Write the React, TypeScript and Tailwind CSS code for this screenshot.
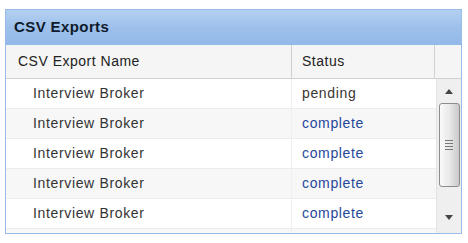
import React from 'react';

const rows = [
    { name: 'Interview Broker', status: 'pending' },
    { name: 'Interview Broker', status: 'complete' },
    { name: 'Interview Broker', status: 'complete' },
    { name: 'Interview Broker', status: 'complete' },
    { name: 'Interview Broker', status: 'complete' },
    { name: '', status: '' },
];

const App: React.FC = () => {
    return (
        <div className="w-[468px] h-[243px] bg-white pt-[9px] pl-[5px]" style={{ fontFamily: '"Liberation Sans", Arial, sans-serif' }}>
            <div className="w-[457px] h-[225px] border border-[#99bbe8] flex flex-col overflow-hidden">
                <div className="h-[35px] shrink-0 flex items-center pl-[8px] bg-gradient-to-b from-[#b4d0f1] via-[#9dc0eb] to-[#93b9e9]">
                    <span className="text-[15px] font-bold text-[#0f1a2a] tracking-[0.4px]">CSV Exports</span>
                </div>
                <div className="h-[34px] shrink-0 flex bg-[#f5f5f5] border-b border-[#d0d0d0] text-[14px] text-[#222] tracking-[0.5px]">
                    <div className="w-[286px] flex items-center pl-[12px] border-r border-[#d0d0d0]">CSV Export Name</div>
                    <div className="w-[143px] flex items-center pl-[10px] border-r border-[#d0d0d0]">Status</div>
                    <div className="flex-1" />
                </div>
                <div className="flex flex-1 min-h-0">
                    <div className="w-[430px] flex flex-col overflow-hidden">
                        {rows.map((r, i) => (
                            <div key={i} className={`h-[30px] shrink-0 flex border-b border-[#ececec] text-[14px] tracking-[0.65px] ${i % 2 === 1 ? 'bg-[#f7f7f7]' : 'bg-white'}`}>
                                <div className="w-[286px] flex items-center pl-[27px] text-[#333] border-r border-[#efefef]">{r.name}</div>
                                <div className={`flex-1 flex items-center pl-[10px] ${r.status === 'pending' ? 'text-[#3b3530]' : 'text-[#25479a]'}`}>{r.status}</div>
                            </div>
                        ))}
                    </div>
                    <div className="flex-1 bg-[#efefef] border-l border-[#e2e2e2] flex flex-col items-center">
                        <div className="h-[24px] flex items-center justify-center">
                            <svg width="8" height="5" viewBox="0 0 8 5"><path d="M4 0 L8 5 L0 5 Z" fill="#444" /></svg>
                        </div>
                        <div className="w-[21px] h-[84px] rounded-[3px] border border-[#8c8c8c] bg-gradient-to-r from-[#fafafa] via-[#e8e8e8] to-[#c9c9c9] flex items-center justify-center">
                            <div className="flex flex-col gap-[2px]">
                                <div className="w-[8px] h-[1px] bg-[#777]" />
                                <div className="w-[8px] h-[1px] bg-[#777]" />
                                <div className="w-[8px] h-[1px] bg-[#777]" />
                                <div className="w-[8px] h-[1px] bg-[#777]" />
                            </div>
                        </div>
                        <div className="flex-1" />
                        <div className="h-[20px] flex items-start justify-center pt-[2px]">
                            <svg width="8" height="5" viewBox="0 0 8 5"><path d="M0 0 L8 0 L4 5 Z" fill="#444" /></svg>
                        </div>
                    </div>
                </div>
            </div>
        </div>
    );
};

export default App;
